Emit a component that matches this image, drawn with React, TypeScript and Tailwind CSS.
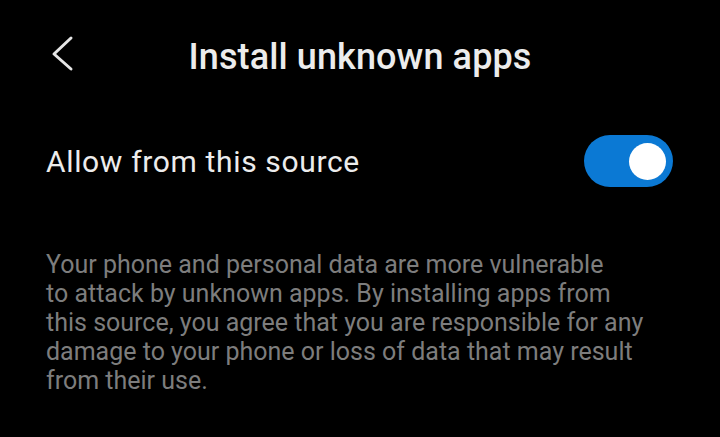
import React from "react";

export default function App() {
  return (
    <div className="w-[720px] h-[437px] bg-black overflow-hidden" style={{ fontFamily: "Roboto, 'Noto Sans', sans-serif" }}>
      <div className="relative pt-[39px] flex justify-center">
        <svg className="absolute left-[50px] top-[35px]" width="26" height="38" viewBox="0 0 26 38">
          <polyline points="21,3 4,19 21,34" fill="none" stroke="#e6e6e6" strokeWidth="3" strokeLinecap="round" strokeLinejoin="round" />
        </svg>
        <div className="text-[36px] font-medium tracking-[0.1px] text-[#ececec] leading-none">Install unknown apps</div>
      </div>
      <div className="mt-[60px] flex items-center justify-between pl-[46px] pr-[47px]">
        <div className="text-[30px] tracking-[0.65px] text-[#ececec] leading-none mt-[2px]">Allow from this source</div>
        <div className="w-[89px] h-[52px] rounded-full bg-[#0b79d4] flex items-center justify-end pr-[7px]">
          <div className="w-[37px] h-[37px] rounded-full bg-white" />
        </div>
      </div>
      <div className="mt-[63px] pl-[46px] text-[25px] leading-[29px] text-[#7d7d7d]">
        Your phone and personal data are more vulnerable<br />
        to attack by unknown apps. By installing apps from<br />
        this source, you agree that you are responsible for any<br />
        damage to your phone or loss of data that may result<br />
        from their use.
      </div>
    </div>
  );
}
